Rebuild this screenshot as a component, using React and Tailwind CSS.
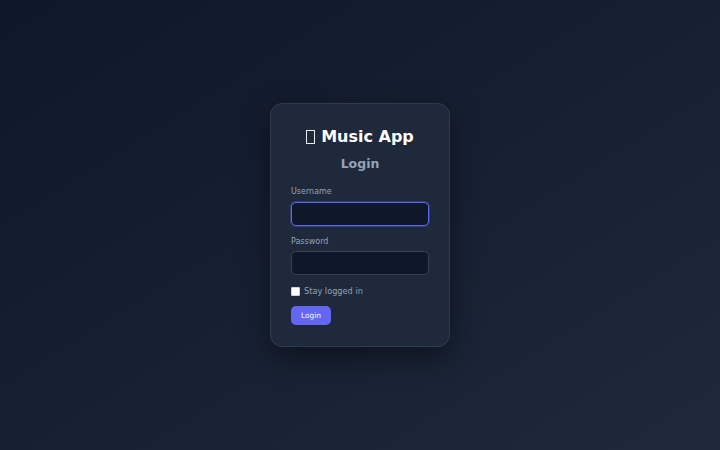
import React from "react";

export default function App() {
  return (
    <div
      className="w-[720px] h-[450px] flex items-center justify-center bg-gradient-to-br from-[#0f172a] to-[#1e293b]"
      style={{ fontFamily: '"DejaVu Sans", sans-serif' }}
    >
      <div className="w-[180px] h-[244px] flex flex-col bg-[#1e293b] border border-[#2d3a4f] rounded-xl shadow-[0_10px_30px_rgba(0,0,0,0.45)] px-[20px] pt-[19px]">
        <h1 className="text-[16px] leading-[28px] font-bold text-white flex items-center justify-center">
          <span className="inline-block w-[9px] h-[14px] border-[1.5px] border-white/90 mr-[6px]"></span>
          <span>Music App</span>
        </h1>
        <h2 className="mt-[2px] text-[12.5px] leading-[22px] font-bold text-[#94a3b8] text-center">Login</h2>
        <label className="mt-[11px] text-[8px] leading-[12px] text-[#94a3b8]">Username</label>
        <div className="mt-[4px] h-[24px] rounded-[5px] bg-[#0f172a] border-[1.5px] border-[#6366f1] ring-1 ring-[#6366f1]/30"></div>
        <label className="mt-[10px] text-[8px] leading-[12px] text-[#94a3b8]">Password</label>
        <div className="mt-[3px] h-[24px] rounded-[5px] bg-[#0f172a] border border-[#334155]"></div>
        <div className="mt-[10px] flex items-center gap-[4px]">
          <div className="w-[9px] h-[9px] bg-white rounded-[1px] border border-[#cbd5e1]"></div>
          <span className="text-[8.2px] leading-[12px] text-[#94a3b8]">Stay logged in</span>
        </div>
        <div className="mt-[4px]">
          <button className="w-[40px] h-[19px] rounded-[5px] bg-[#6366f1] text-white text-[7.4px] leading-none">Login</button>
        </div>
      </div>
    </div>
  );
}
